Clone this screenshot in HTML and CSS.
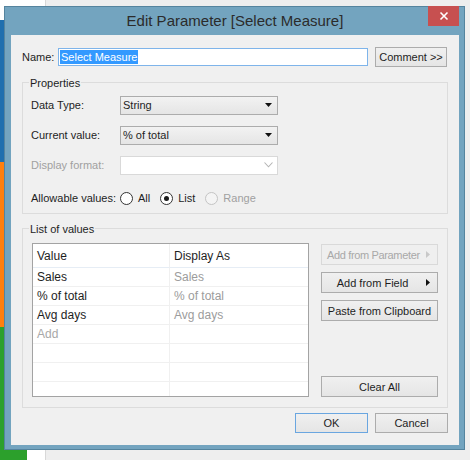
FILE: index.html
```html
<!DOCTYPE html>
<html>
<head>
<meta charset="utf-8">
<link rel="stylesheet" href="styles.css">
</head>
<body>
<div class="side">
  <div class="strip blue"></div>
  <div class="strip orange"></div>
  <div class="strip green"></div>
</div>
<div class="main"></div>

<div class="window">
  <div class="titlebar">
    <span class="title">Edit Parameter [Select Measure]</span>
    <div class="close"><svg width="10" height="10" viewBox="0 0 10 10"><path d="M1.5 1.5 L8.5 8.5 M8.5 1.5 L1.5 8.5" stroke="#fff" stroke-width="1.6" fill="none"/></svg></div>
  </div>
  <div class="client">
    <div class="name-row">
      <span class="name-label">Name:</span>
      <div class="input"><span class="sel">Select Measure</span></div>
      <div class="btn comment">Comment &gt;&gt;</div>
    </div>

    <div class="group props">
      <span class="group-title">Properties</span>
      <div class="prop-row">
        <span class="plabel">Data Type:</span>
        <div class="select"><span>String</span><svg width="7" height="4" viewBox="0 0 7 4"><path d="M0 0 H7 L3.5 4 Z" fill="#111"/></svg></div>
      </div>
      <div class="prop-row">
        <span class="plabel">Current value:</span>
        <div class="select"><span>% of total</span><svg width="7" height="4" viewBox="0 0 7 4"><path d="M0 0 H7 L3.5 4 Z" fill="#111"/></svg></div>
      </div>
      <div class="prop-row">
        <span class="plabel disabled">Display format:</span>
        <div class="select off"><span></span><svg width="9" height="6" viewBox="0 0 9 6"><path d="M0.5 0.5 L4.5 4.8 L8.5 0.5" stroke="#b4b4b4" stroke-width="1.1" fill="none"/></svg></div>
      </div>
      <div class="prop-row allow">
        <span class="plabel">Allowable values:</span>
        <div class="radios">
          <label class="ropt"><span class="radio"></span>All</label>
          <label class="ropt"><span class="radio on"></span>List</label>
          <label class="ropt disabled"><span class="radio dis"></span>Range</label>
        </div>
      </div>
    </div>

    <div class="group list">
      <span class="group-title">List of values</span>
      <div class="list-body">
        <div class="table">
          <div class="cell head">Value</div><div class="cell head">Display As</div>
          <div class="cell">Sales</div><div class="cell dim">Sales</div>
          <div class="cell">% of total</div><div class="cell dim">% of total</div>
          <div class="cell">Avg days</div><div class="cell dim">Avg days</div>
          <div class="cell add">Add</div><div class="cell"></div>
          <div class="cell"></div><div class="cell"></div>
          <div class="cell"></div><div class="cell"></div>
          <div class="cell"></div><div class="cell"></div>
        </div>
        <div class="actions">
          <div class="btn side-btn menu off">Add from Parameter<svg class="arr" width="4" height="7" viewBox="0 0 4 7"><path d="M0 0 L4 3.5 L0 7 Z" fill="#c8c8c8"/></svg></div>
          <div class="btn side-btn menu">Add from Field<svg class="arr" width="4" height="7" viewBox="0 0 4 7"><path d="M0 0 L4 3.5 L0 7 Z" fill="#111"/></svg></div>
          <div class="btn side-btn">Paste from Clipboard</div>
          <div class="btn side-btn clear">Clear All</div>
        </div>
      </div>
    </div>

    <div class="footer">
      <div class="btn ok">OK</div>
      <div class="btn">Cancel</div>
    </div>
  </div>
</div>
</body>
</html>
```
FILE: styles.css
```css
* { box-sizing: border-box; }
html, body { margin: 0; padding: 0; }
body {
  width: 470px;
  height: 460px;
  overflow: hidden;
  display: flex;
  background: #eeeeee;
  font-family: "Liberation Sans", Arial, sans-serif;
  font-size: 11px;
  color: #1e1e1e;
  position: relative;
}
.side {
  width: 46px;
  background: #ffffff;
  border-right: 1px solid #d8d8d8;
  padding-top: 20px;
  display: flex;
  flex-direction: column;
}
.strip { width: 27px; }
.blue { height: 142px; background: #1f6fae; }
.orange { height: 165px; background: #ff7f0e; }
.green { flex: 1; background: #2ca02c; }
.main { flex: 1; }

.window {
  position: absolute;
  left: 4px;
  top: 6px;
  width: 461px;
  height: 444px;
  background: #73a4bf;
  border: 1px solid #55849e;
  padding: 0 5px 4px 6px;
  display: flex;
  flex-direction: column;
}
.titlebar {
  height: 28px;
  display: grid;
  grid-template-columns: 1fr auto 1fr;
  align-items: start;
}
.title {
  grid-column: 2;
  line-height: 28px;
  font-size: 15px;
  color: #2b2b2b;
  white-space: nowrap;
}
.close {
  grid-column: 3;
  justify-self: end;
  width: 31px;
  height: 20px;
  margin-top: -1px;
  background: #c75050;
  display: flex;
  align-items: center;
  justify-content: center;
}
.client {
  flex: 1;
  background: #f0f0f0;
  padding: 12px 11px 12px;
  display: flex;
  flex-direction: column;
}
.name-row {
  display: flex;
  align-items: center;
  height: 20px;
}
.name-label { width: 36px; }
.input {
  width: 310px;
  height: 18px;
  border: 1px solid #7eb4ea;
  background: #ffffff;
  padding-left: 1px;
  display: flex;
  align-items: center;
}
.sel {
  background: #3399ff;
  color: #ffffff;
  line-height: 14px;
  padding: 0 1px;
}
.btn {
  border: 1px solid #acacac;
  background: linear-gradient(#f0f0f0, #e5e5e5);
  display: flex;
  align-items: center;
  justify-content: center;
  color: #1e1e1e;
  white-space: nowrap;
}
.comment { width: 72px; height: 20px; margin-left: 7px; }

.group {
  border: 1px solid #dcdcdc;
  display: flex;
  flex-direction: column;
}
.group-title {
  align-self: flex-start;
  margin: -7px 0 0 6px;
  padding: 0 1px;
  line-height: 14px;
  background: #f0f0f0;
}
.props { margin-top: 15px; }
.prop-row {
  display: flex;
  align-items: center;
  height: 30px;
  padding-left: 8px;
}
.prop-row.allow { margin-top: 3px; }
.plabel { width: 89px; }
.disabled { color: #a0a0a0; }
.select {
  width: 158px;
  height: 19px;
  border: 1px solid #acacac;
  background: linear-gradient(#f2f2f2, #e5e5e5);
  display: flex;
  align-items: center;
  justify-content: space-between;
  padding: 0 5px 0 2px;
}
.select.off {
  background: #ffffff;
  border-color: #d9d9d9;
  padding-right: 4px;
}
.radios { display: flex; align-items: center; gap: 10px; }
.ropt { display: flex; align-items: center; gap: 5px; }
.radio {
  width: 13px;
  height: 13px;
  border-radius: 50%;
  border: 1px solid #333333;
  background: #ffffff;
  display: flex;
  align-items: center;
  justify-content: center;
}
.radio.on::after {
  content: "";
  width: 5px;
  height: 5px;
  border-radius: 50%;
  background: #1a1a1a;
}
.radio.dis { border-color: #c4c4c4; background: #f4f4f4; }

.list { margin-top: 14px; }
.list-body {
  display: flex;
  padding: 7px 9px 10px 9px;
  gap: 12px;
}
.table {
  width: 277px;
  height: 154px;
  border: 1px solid #a3a3a3;
  background: #ffffff;
  display: grid;
  grid-template-columns: 137px 1fr;
  grid-auto-rows: 19px;
  grid-template-rows: 24px;
  overflow: hidden;
  font-size: 12px;
}
.cell {
  border-bottom: 1px solid #f0f0f0;
  padding-left: 4px;
  display: flex;
  align-items: center;
  white-space: nowrap;
}
.cell:nth-child(odd) { border-right: 1px solid #f0f0f0; }
.cell.head { border-bottom-color: #e6edf5; }
.dim { color: #9c9c9c; }
.add { color: #a8a8a8; }

.actions {
  width: 117px;
  display: flex;
  flex-direction: column;
  gap: 7px;
  padding-top: 1px;
}
.side-btn { height: 21px; position: relative; }
.side-btn.menu { padding-right: 14px; }
.side-btn.menu.off {
  justify-content: flex-start;
  padding: 0 0 0 5px;
  letter-spacing: -0.35px;
}
.side-btn.off { color: #a8a8a8; border-color: #d9d9d9; background: #efefef; }
.arr { position: absolute; right: 7px; top: 6px; }
.clear { margin-top: auto; }

.footer {
  display: flex;
  justify-content: flex-end;
  gap: 7px;
  margin-top: 5px;
}
.footer .btn { width: 73px; height: 20px; }
.ok { border-color: #6aa6e0; }
```
